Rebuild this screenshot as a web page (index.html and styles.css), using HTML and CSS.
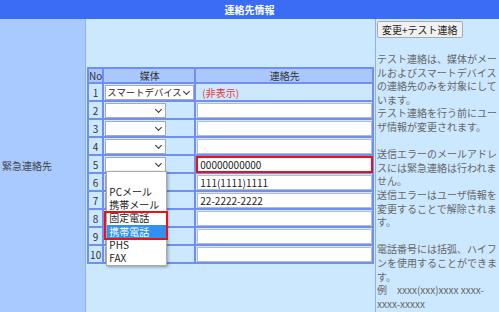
FILE: index.html
```html
<!DOCTYPE html>
<html lang="ja">
<head>
    <meta charset="UTF-8">
    <title>連絡先情報</title>
    <link rel="stylesheet" href="styles.css">
</head>
<body>
    <div class="panel">
        <div class="panel-title">連絡先情報</div>

        <div class="panel-body">
            <div class="label-col">緊急連絡先</div>

            <div class="main-col">
                <table class="contact-table">
                    <tr>
                        <th class="no">No</th>
                        <th class="media">媒体</th>
                        <th class="address">連絡先</th>
                    </tr>
                    <tr>
                        <td class="no">1</td>
                        <td><span class="sel sel-wide"><select><option>スマートデバイス</option></select></span></td>
                        <td><span class="hidden-note">(非表示)</span></td>
                    </tr>
                    <tr>
                        <td class="no">2</td>
                        <td><span class="sel"><select><option></option></select></span></td>
                        <td><input type="text"></td>
                    </tr>
                    <tr>
                        <td class="no">3</td>
                        <td><span class="sel"><select><option></option></select></span></td>
                        <td><input type="text"></td>
                    </tr>
                    <tr>
                        <td class="no">4</td>
                        <td><span class="sel"><select><option></option></select></span></td>
                        <td><input type="text"></td>
                    </tr>
                    <tr>
                        <td class="no">5</td>
                        <td>
                            <span class="sel">
                                <select><option></option></select>
                                <!-- opened option list of row 5 -->
                                <ul class="select-menu">
                                    <li>&nbsp;</li>
                                    <li>PCメール</li>
                                    <li>携帯メール</li>
                                    <li>固定電話</li>
                                    <li class="active">携帯電話</li>
                                    <li>PHS</li>
                                    <li>FAX</li>
                                </ul>
                                <span class="menu-mark"></span>
                            </span>
                        </td>
                        <td><input type="text" class="input-error" value="00000000000"></td>
                    </tr>
                    <tr>
                        <td class="no">6</td>
                        <td><span class="sel"><select><option></option></select></span></td>
                        <td><input type="text" value="111(1111)1111"></td>
                    </tr>
                    <tr>
                        <td class="no">7</td>
                        <td><span class="sel"><select><option></option></select></span></td>
                        <td><input type="text" value="22-2222-2222"></td>
                    </tr>
                    <tr>
                        <td class="no">8</td>
                        <td><span class="sel"><select><option></option></select></span></td>
                        <td><input type="text"></td>
                    </tr>
                    <tr>
                        <td class="no">9</td>
                        <td><span class="sel"><select><option></option></select></span></td>
                        <td><input type="text"></td>
                    </tr>
                    <tr>
                        <td class="no">10</td>
                        <td><span class="sel"><select><option></option></select></span></td>
                        <td><input type="text"></td>
                    </tr>
                </table>
            </div>

            <div class="note-col">
                <button type="button">変更+テスト連絡</button>
                <p>テスト連絡は、媒体がメールおよびスマートデバイスの連絡先のみを対象にしています。<br>テスト連絡を行う前にユーザ情報が変更されます。</p>
                <p>送信エラーのメールアドレスには緊急連絡は行われません。<br>送信エラーはユーザ情報を変更することで解除されます。</p>
                <p>電話番号には括弧、ハイフンを使用することができます。<br>例　xxxx(xxx)xxxx xxxx-xxxx-xxxxx</p>
            </div>
        </div>
    </div>
</body>
</html>
```

FILE: styles.css
```css
* {
    margin: 0;
    padding: 0;
    box-sizing: border-box;
}

body {
    font-family: "Noto Sans CJK JP", "Noto Sans", sans-serif;
    font-size: 10px;
    color: #333;
    background: #cce8ff;
}

.panel-title {
    height: 19px;
    line-height: 19px;
    background: #3a6cf6;
    color: #fff;
    font-weight: bold;
    text-align: center;
}

.panel-body {
    display: grid;
    grid-template-columns: 86px 290px 1fr;
    min-height: 293px;
}

.label-col {
    display: flex;
    align-items: center;
    padding-left: 2px;
    background: #a9cafd;
    border-right: 1px solid #8fb0f5;
    color: #444;
}

.main-col {
    display: flex;
    align-items: center;
    border-right: 1px solid #8fb0f5;
}

/* table */
.contact-table {
    margin-left: 1px;
    border: 1px solid #6f8ff5;
    border-spacing: 0;
}

.contact-table th,
.contact-table td {
    border: 1px solid #6f8ff5;
    padding: 0 0 0 1px;
    font-weight: normal;
    white-space: nowrap;
}

.contact-table th {
    height: 15px;
    line-height: 13px;
    background: #aac8ff;
}

.contact-table td {
    height: 18px;
}

.contact-table .no {
    width: 15px;
    padding: 0;
    text-align: center;
}

.contact-table .media {
    width: 92px;
}

.contact-table .address {
    width: 178px;
}

select,
input,
button {
    font-family: inherit;
    font-size: 10px;
    color: #222;
}

/* select with a small chevron */
.sel {
    position: relative;
    display: block;
    width: 61px;
}

.sel-wide {
    width: 89px;
}

.sel::after {
    content: "";
    position: absolute;
    top: 4px;
    right: 5px;
    width: 4px;
    height: 4px;
    border-right: 1px solid #333;
    border-bottom: 1px solid #333;
    transform: rotate(45deg);
    pointer-events: none;
}

select {
    display: block;
    width: 100%;
    height: 15px;
    padding: 0 0 0 1px;
    border: 1px solid #aaa;
    border-radius: 0;
    background: #fff;
    appearance: none;
    -webkit-appearance: none;
    font-size: 9.4px;
    line-height: 13px;
}

input {
    display: block;
    width: 175px;
    height: 15px;
    padding: 0 2px;
    border: 1px solid #bbb;
    background: #fff;
}

.input-error {
    outline: 2px solid #ee1111;
    outline-offset: -1px;
}

.hidden-note {
    padding-left: 5px;
    color: #ee3333;
}

/* opened select list */
.select-menu {
    position: absolute;
    top: 14px;
    left: 1px;
    width: 61px;
    list-style: none;
    background: #fff;
    border: 1px solid #aaa;
    box-shadow: 1px 1px 3px rgba(0, 0, 0, 0.35);
    z-index: 10;
}

.select-menu li {
    height: 13.3px;
    line-height: 13.3px;
    padding-left: 2px;
    color: #222;
}

.select-menu li.active {
    background: #3190f0;
    color: #fff;
}

.menu-mark {
    position: absolute;
    top: 54px;
    left: -1px;
    width: 64px;
    height: 29px;
    border: 2.5px solid #ee1111;
    z-index: 11;
}

/* notes */
.note-col {
    padding: 2px 1px 0 1px;
    color: #666;
    line-height: 13.6px;
}

.note-col button {
    height: 17px;
    padding: 0 4px;
    margin-bottom: 14px;
    border: 1px solid #aaa;
    border-radius: 2px;
    background: #f0f0f0;
    line-height: 15px;
}

.note-col p {
    margin-bottom: 13.6px;
}

.note-col p:last-child {
    margin-bottom: 0;
}
```
